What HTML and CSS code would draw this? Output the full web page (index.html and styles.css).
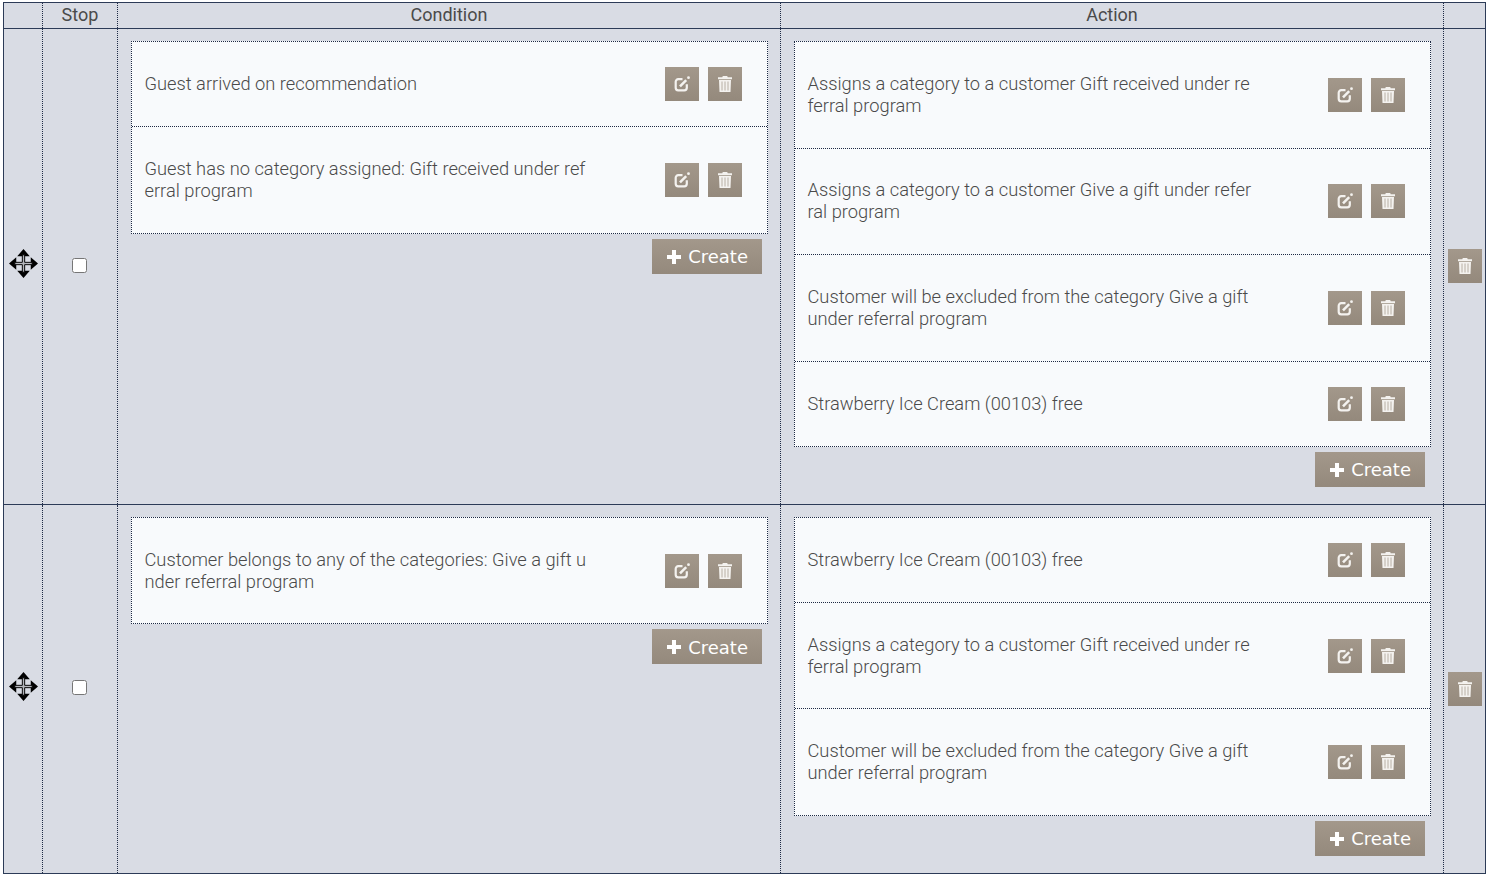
FILE: index.html
```html
<!DOCTYPE html>
<html lang="en">
<head>
  <meta charset="UTF-8" />
  <title>Rules</title>
  <link rel="stylesheet" href="styles.css">
</head>
<body>
  <svg class="icon-defs" width="0" height="0">
    <symbol id="i-edit" viewBox="0 0 16 16">
      <path fill="none" stroke="currentColor" stroke-width="2.200" d="M8.500 3.200H4.200a2.500 2.500 0 0 0-2.500 2.500v6.100a2.500 2.500 0 0 0 2.500 2.500h6.100a2.500 2.500 0 0 0 2.500-2.500V8.200"/>
      <path fill="none" stroke="currentColor" stroke-width="2.600" d="M6 10.400L12.200 4.200"/>
      <circle fill="currentColor" cx="14.500" cy="1.700" r="1.400"/>
    </symbol>
    <symbol id="i-trash" viewBox="0 0 16 16">
      <path fill="currentColor" d="M5.800 0h4.400l.5 1.300H15v1.900H1V1.300h4.300zM2 4h12l-.5 12h-11z"/>
      <path fill="none" stroke="#a3988b" stroke-opacity=".75" stroke-width="1" d="M5 5.500v9M8 5.500v9M11 5.500v9"/>
    </symbol>
    <symbol id="i-move" viewBox="0 0 30 30">
      <path fill="currentColor" d="M15 0l6.500 7.500h-13zM15 30l-6.500-7.500h13zM0 15l7.500-6.500v13zM30 15l-7.500 6.500v-13z"/>
      <path fill="#b4b6bc" stroke="currentColor" stroke-width="1" d="M13.800 6h2.400v7.800H24v2.400h-7.800V24h-2.400v-7.800H6v-2.400h7.800z"/>
    </symbol>
    <symbol id="i-plus" viewBox="0 0 14 14">
      <path fill="currentColor" d="M5 0h4v5h5v4H9v5H5V9H0V5h5z"/>
    </symbol>
  </svg>

  <table class="rules">
    <thead>
      <tr>
        <th class="col-move"></th>
        <th class="col-stop">Stop</th>
        <th class="col-main">Condition</th>
        <th class="col-main">Action</th>
        <th class="col-del"></th>
      </tr>
    </thead>
    <tbody>
      <tr>
        <td class="cell-center"><svg class="move"><use href="#i-move"/></svg></td>
        <td class="cell-center"><input type="checkbox" class="stop-check" /></td>
        <td class="cell-list">
          <div class="list">
            <div class="item item-short">
              <div class="item-text">Guest arrived on recommendation</div>
              <div class="item-btns">
                <a class="btn"><svg><use href="#i-edit"/></svg></a>
                <a class="btn"><svg><use href="#i-trash"/></svg></a>
              </div>
            </div>
            <div class="item">
              <div class="item-text">Guest has no category assigned: Gift received under referral program</div>
              <div class="item-btns">
                <a class="btn"><svg><use href="#i-edit"/></svg></a>
                <a class="btn"><svg><use href="#i-trash"/></svg></a>
              </div>
            </div>
          </div>
          <div class="create-row"><a class="create"><svg><use href="#i-plus"/></svg>Create</a></div>
        </td>
        <td class="cell-list">
          <div class="list">
            <div class="item">
              <div class="item-text">Assigns a category to a customer Gift received under referral program</div>
              <div class="item-btns">
                <a class="btn"><svg><use href="#i-edit"/></svg></a>
                <a class="btn"><svg><use href="#i-trash"/></svg></a>
              </div>
            </div>
            <div class="item">
              <div class="item-text">Assigns a category to a customer Give a gift under referral program</div>
              <div class="item-btns">
                <a class="btn"><svg><use href="#i-edit"/></svg></a>
                <a class="btn"><svg><use href="#i-trash"/></svg></a>
              </div>
            </div>
            <div class="item">
              <div class="item-text">Customer will be excluded from the category Give a gift under referral program</div>
              <div class="item-btns">
                <a class="btn"><svg><use href="#i-edit"/></svg></a>
                <a class="btn"><svg><use href="#i-trash"/></svg></a>
              </div>
            </div>
            <div class="item item-short">
              <div class="item-text">Strawberry Ice Cream (00103) free</div>
              <div class="item-btns">
                <a class="btn"><svg><use href="#i-edit"/></svg></a>
                <a class="btn"><svg><use href="#i-trash"/></svg></a>
              </div>
            </div>
          </div>
          <div class="create-row"><a class="create"><svg><use href="#i-plus"/></svg>Create</a></div>
        </td>
        <td class="cell-center"><a class="btn"><svg><use href="#i-trash"/></svg></a></td>
      </tr>
      <tr>
        <td class="cell-center"><svg class="move"><use href="#i-move"/></svg></td>
        <td class="cell-center"><input type="checkbox" class="stop-check" /></td>
        <td class="cell-list">
          <div class="list">
            <div class="item">
              <div class="item-text">Customer belongs to any of the categories: Give a gift under referral program</div>
              <div class="item-btns">
                <a class="btn"><svg><use href="#i-edit"/></svg></a>
                <a class="btn"><svg><use href="#i-trash"/></svg></a>
              </div>
            </div>
          </div>
          <div class="create-row"><a class="create"><svg><use href="#i-plus"/></svg>Create</a></div>
        </td>
        <td class="cell-list">
          <div class="list">
            <div class="item item-short">
              <div class="item-text">Strawberry Ice Cream (00103) free</div>
              <div class="item-btns">
                <a class="btn"><svg><use href="#i-edit"/></svg></a>
                <a class="btn"><svg><use href="#i-trash"/></svg></a>
              </div>
            </div>
            <div class="item">
              <div class="item-text">Assigns a category to a customer Gift received under referral program</div>
              <div class="item-btns">
                <a class="btn"><svg><use href="#i-edit"/></svg></a>
                <a class="btn"><svg><use href="#i-trash"/></svg></a>
              </div>
            </div>
            <div class="item">
              <div class="item-text">Customer will be excluded from the category Give a gift under referral program</div>
              <div class="item-btns">
                <a class="btn"><svg><use href="#i-edit"/></svg></a>
                <a class="btn"><svg><use href="#i-trash"/></svg></a>
              </div>
            </div>
          </div>
          <div class="create-row"><a class="create"><svg><use href="#i-plus"/></svg>Create</a></div>
        </td>
        <td class="cell-center"><a class="btn"><svg><use href="#i-trash"/></svg></a></td>
      </tr>
    </tbody>
  </table>
</body>
</html>
```

FILE: styles.css
```css
* { box-sizing: border-box; }

body {
  margin: 0;
  padding: 2px 0 0 3px;
  font-family: 'Roboto', sans-serif;
  background: #fff;
  color: #4a4a4a;
  overflow: hidden;
}

.icon-defs {
  position: absolute;
}

.rules {
  width: 1483px;
  table-layout: fixed;
  border-collapse: collapse;
  border: 1px solid #2c3b57;
  background-color: #d9dce4;
}

.rules th, .rules td {
  padding: 0;
  border-left: 1px dotted #1e2a44;
  border-right: 1px dotted #1e2a44;
}

.rules thead th {
  height: 26px;
  padding-bottom: 2px;
  font-size: 18px;
  font-weight: 400;
  color: #4a4a4a;
  border-bottom: 1px solid #2c3b57;
}

.rules tbody tr + tr td {
  border-top: 1px solid #2c3b57;
}

.col-move { width: 39px; }
.col-stop { width: 75px; }
.col-main { width: 663px; }
.col-del { width: 42px; }

.cell-center {
  text-align: center;
  vertical-align: middle;
}

.cell-center .btn {
  margin: 0 auto;
}

.rules td.cell-list {
  vertical-align: top;
  padding: 12px 12px 17px 13px;
}

.move {
  display: block;
  width: 29px;
  height: 29px;
  margin: -5px 0 0 5px;
  color: #000;
}

.stop-check {
  display: block;
  width: 15px;
  height: 15px;
  margin: -2px 0 0 29px;
}

.list {
  background-color: #f8fafc;
  border: 1px dotted #1e2a44;
}

.item {
  display: flex;
  align-items: center;
  justify-content: space-between;
  padding: 0 25px 0 12.5px;
}

.item + .item {
  border-top: 1px dotted #1e2a44;
}

.item-text {
  width: 446px;
  padding: 30.8px 0;
  font-size: 18.3px;
  font-weight: 300;
  line-height: 22px;
  word-break: break-all;
}

.item-short .item-text {
  padding: 31px 0;
}

.item-btns {
  display: flex;
  gap: 9px;
}

.btn {
  display: flex;
  align-items: center;
  justify-content: center;
  width: 34px;
  height: 34px;
  color: #f4f2ef;
  background: linear-gradient(#a3988b, #94897c);
}

.btn svg {
  width: 16px;
  height: 16px;
}

.create-row {
  display: flex;
  justify-content: flex-end;
  margin-top: 5px;
  padding-right: 6px;
}

.create {
  display: flex;
  align-items: center;
  gap: 7px;
  height: 35px;
  padding: 1px 14px 0 15px;
  font-family: 'DejaVu Sans', sans-serif;
  font-size: 18px;
  color: #fff;
  background: linear-gradient(#a3988b, #94897c);
}

.create svg {
  width: 14px;
  height: 14px;
}
```
